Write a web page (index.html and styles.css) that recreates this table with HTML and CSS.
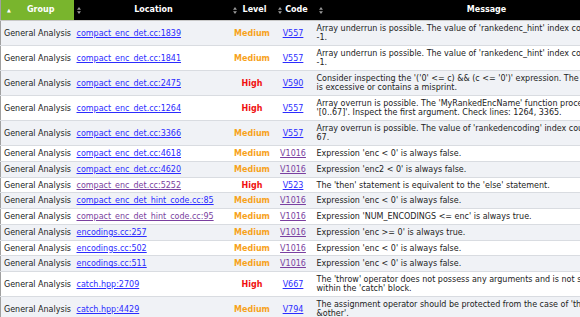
FILE: index.html
```html
<!DOCTYPE html>
<html lang="en">
<head>
    <meta charset="UTF-8">
    <title>Analysis Report</title>
    <link rel="stylesheet" href="styles.css">
</head>
<body>
    <table class="report">
        <colgroup>
            <col class="c-group">
            <col class="c-loc">
            <col class="c-level">
            <col class="c-code">
            <col class="c-msg">
        </colgroup>
        <thead>
            <tr>
                <th class="sorted"><span class="arrow">&#9650;</span>Group</th>
                <th><svg class="sort" viewBox="0 0 5 9"><path d="M2.5 0L5 3.5H0z M2.5 9L0 5.5H5z"/></svg>Location</th>
                <th><svg class="sort" viewBox="0 0 5 9"><path d="M2.5 0L5 3.5H0z M2.5 9L0 5.5H5z"/></svg>Level</th>
                <th class="code-head"><svg class="sort" viewBox="0 0 5 9"><path d="M2.5 0L5 3.5H0z M2.5 9L0 5.5H5z"/></svg>Code</th>
                <th class="msg-head"><svg class="sort" viewBox="0 0 5 9"><path d="M2.5 0L5 3.5H0z M2.5 9L0 5.5H5z"/></svg>Message</th>
            </tr>
        </thead>
        <tbody>
            <tr>
                <td>General Analysis</td>
                <td><a href="#">compact_enc_det.cc:1839</a></td>
                <td class="medium">Medium</td>
                <td class="code"><a href="#">V557</a></td>
                <td class="msg">Array underrun is possible. The value of 'rankedenc_hint' index could reach -1.</td>
            </tr>
            <tr>
                <td>General Analysis</td>
                <td><a href="#">compact_enc_det.cc:1841</a></td>
                <td class="medium">Medium</td>
                <td class="code"><a href="#">V557</a></td>
                <td class="msg">Array underrun is possible. The value of 'rankedenc_hint' index could reach -1.</td>
            </tr>
            <tr>
                <td>General Analysis</td>
                <td><a href="#">compact_enc_det.cc:2475</a></td>
                <td class="high">High</td>
                <td class="code"><a href="#">V590</a></td>
                <td class="msg">Consider inspecting the '('0' &lt;= c) &amp;&amp; (c &lt;= '0')' expression. The expression is excessive or contains a misprint.</td>
            </tr>
            <tr>
                <td>General Analysis</td>
                <td><a href="#">compact_enc_det.cc:1264</a></td>
                <td class="high">High</td>
                <td class="code"><a href="#">V557</a></td>
                <td class="msg">Array overrun is possible. The 'MyRankedEncName' function processes value '[0..67]'. Inspect the first argument. Check lines: 1264, 3365.</td>
            </tr>
            <tr>
                <td>General Analysis</td>
                <td><a href="#">compact_enc_det.cc:3366</a></td>
                <td class="medium">Medium</td>
                <td class="code"><a href="#">V557</a></td>
                <td class="msg">Array overrun is possible. The value of 'rankedencoding' index could reach 67.</td>
            </tr>
            <tr>
                <td>General Analysis</td>
                <td><a href="#">compact_enc_det.cc:4618</a></td>
                <td class="medium">Medium</td>
                <td class="code"><a href="#" class="seen">V1016</a></td>
                <td class="msg">Expression 'enc &lt; 0' is always false.</td>
            </tr>
            <tr>
                <td>General Analysis</td>
                <td><a href="#">compact_enc_det.cc:4620</a></td>
                <td class="medium">Medium</td>
                <td class="code"><a href="#" class="seen">V1016</a></td>
                <td class="msg">Expression 'enc2 &lt; 0' is always false.</td>
            </tr>
            <tr>
                <td>General Analysis</td>
                <td><a href="#" class="seen">compact_enc_det.cc:5252</a></td>
                <td class="high">High</td>
                <td class="code"><a href="#">V523</a></td>
                <td class="msg">The 'then' statement is equivalent to the 'else' statement.</td>
            </tr>
            <tr>
                <td>General Analysis</td>
                <td><a href="#">compact_enc_det_hint_code.cc:85</a></td>
                <td class="medium">Medium</td>
                <td class="code"><a href="#" class="seen">V1016</a></td>
                <td class="msg">Expression 'enc &lt; 0' is always false.</td>
            </tr>
            <tr>
                <td>General Analysis</td>
                <td><a href="#" class="seen">compact_enc_det_hint_code.cc:95</a></td>
                <td class="medium">Medium</td>
                <td class="code"><a href="#" class="seen">V1016</a></td>
                <td class="msg">Expression 'NUM_ENCODINGS &lt;= enc' is always true.</td>
            </tr>
            <tr>
                <td>General Analysis</td>
                <td><a href="#">encodings.cc:257</a></td>
                <td class="medium">Medium</td>
                <td class="code"><a href="#" class="seen">V1016</a></td>
                <td class="msg">Expression 'enc &gt;= 0' is always true.</td>
            </tr>
            <tr>
                <td>General Analysis</td>
                <td><a href="#">encodings.cc:502</a></td>
                <td class="medium">Medium</td>
                <td class="code"><a href="#" class="seen">V1016</a></td>
                <td class="msg">Expression 'enc &lt; 0' is always false.</td>
            </tr>
            <tr>
                <td>General Analysis</td>
                <td><a href="#">encodings.cc:511</a></td>
                <td class="medium">Medium</td>
                <td class="code"><a href="#" class="seen">V1016</a></td>
                <td class="msg">Expression 'enc &lt; 0' is always false.</td>
            </tr>
            <tr>
                <td>General Analysis</td>
                <td><a href="#">catch.hpp:2709</a></td>
                <td class="high">High</td>
                <td class="code"><a href="#">V667</a></td>
                <td class="msg">The 'throw' operator does not possess any arguments and is not situated within the 'catch' block.</td>
            </tr>
            <tr>
                <td>General Analysis</td>
                <td><a href="#">catch.hpp:4429</a></td>
                <td class="medium">Medium</td>
                <td class="code"><a href="#">V794</a></td>
                <td class="msg">The assignment operator should be protected from the case of 'this == &amp;other'.</td>
            </tr>
        </tbody>
    </table>
</body>
</html>
```

FILE: styles.css
```css
body {
    margin: 0;
    overflow: hidden;
    font-family: "DejaVu Sans", Verdana, sans-serif;
    font-size: 8px;
    color: #222;
    background-color: #ffffff;
}
.report {
    width: 653px;
    table-layout: fixed;
    border-collapse: collapse;
    border-left: 1px solid #a0a0a0;
}
.c-group { width: 73px; }
.c-loc { width: 156px; }
.c-level { width: 46px; }
.c-code { width: 36px; }
.c-msg { width: 342px; }

.report th {
    height: 20px;
    padding: 0 3px;
    line-height: 20px;
    background-color: #000;
    color: #fff;
    font-weight: bold;
    font-size: 8px;
    text-align: center;
    white-space: nowrap;
    border-bottom: 1px solid #c8c8c8;
}
.report th.sorted {
    background-color: #79b52d;
}
.report th.code-head {
    padding-left: 2px;
    padding-right: 0;
}
.report th.msg-head {
    padding-left: 7px;
}
.arrow {
    float: left;
    font-size: 5px;
    margin-left: 3px;
}
.sort {
    float: left;
    width: 4px;
    height: 7px;
    margin-top: 7px;
    fill: #9a9a9a;
}
.report td {
    padding: 3px 4px 2.5px 3px;
    line-height: 9.25px;
    vertical-align: middle;
    white-space: nowrap;
    border-bottom: 1px solid #d9dce1;
}
.report tbody tr:nth-child(odd) td {
    background-color: #f0f2f6;
}
.report td.msg {
    white-space: normal;
    padding-left: 5px;
    padding-right: 26px;
}
.report a {
    color: #2b2bff;
}
.report a.seen {
    color: #7a3fa0;
}
.medium,
.high {
    font-weight: bold;
    text-align: center;
}
.medium {
    color: #f7a21b;
}
.high {
    color: #f01010;
}
.code {
    text-align: center;
}
```
